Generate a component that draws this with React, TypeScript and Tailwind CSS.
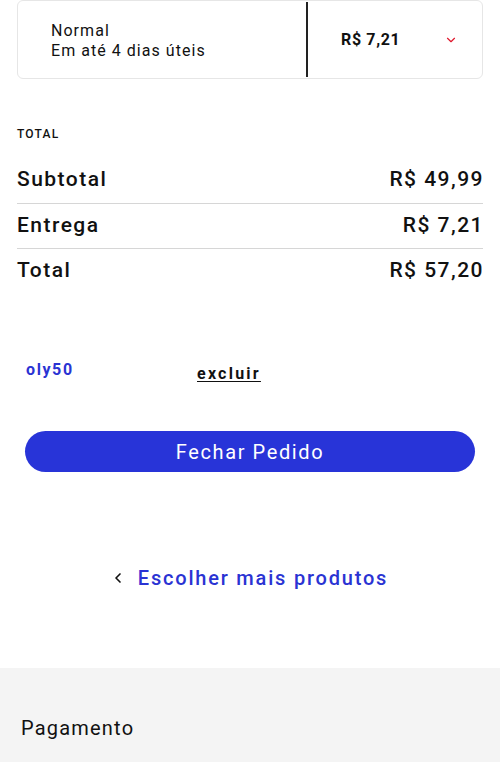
import { ChevronDown, ChevronLeft } from "lucide-react"

export default function App() {
  return (
    <main className="w-[500px] min-h-[762px] bg-white text-[#111] font-['Roboto',sans-serif] tracking-[0.08em] overflow-hidden">
      {/* Shipping option */}
      <div className="px-[17px]">
        <div className="flex h-[79px] border border-[#e6e6e6] rounded-md">
          <div className="flex-1 flex flex-col justify-center pl-[33px] pt-[2px] text-[16px] leading-[20px] tracking-[0.065em]">
            <span>Normal</span>
            <span>Em até 4 dias úteis</span>
          </div>
          <div className="w-[2px] bg-[#222] my-[1px]" />
          <div className="w-[174px] flex items-center pl-[33px] pr-[24px]">
            <span className="flex-1 text-[16px] font-bold tracking-[0.04em]">R$ 7,21</span>
            <ChevronDown className="w-[14px] h-[14px] text-[#e0182d]" strokeWidth={2} />
          </div>
        </div>
      </div>

      {/* Totals */}
      <section className="px-[17px] mt-[48px]">
        <h2 className="text-[12px] font-medium leading-[14px] tracking-[0.1em]">TOTAL</h2>
        <div className="mt-[18px] text-[21px] font-medium tracking-[0.07em]">
          <div className="flex justify-between h-[45px] items-center border-b border-[#d6d6d6] pb-[2px]">
            <span>Subtotal</span>
            <span className="-mr-[1px]">R$ 49,99</span>
          </div>
          <div className="flex justify-between h-[45px] items-center border-b border-[#d6d6d6]">
            <span>Entrega</span>
            <span className="-mr-[1px]">R$ 7,21</span>
          </div>
          <div className="flex justify-between h-[44px] items-center">
            <span>Total</span>
            <span className="-mr-[1px]">R$ 57,20</span>
          </div>
        </div>
      </section>

      {/* Coupon */}
      <div className="flex items-start px-[26px] mt-[67px]">
        <span className="w-[171px] text-[16px] font-bold text-[#2a33d3] leading-[20px] tracking-[0.1em]">oly50</span>
        <button className="mt-[4px] text-[16px] font-bold underline underline-offset-2 leading-[20px] tracking-[0.14em]">excluir</button>
      </div>

      <div className="px-[25px] mt-[47px]">
        <button className="w-full h-[41px] rounded-full bg-[#2834d8] text-white text-[20px] tracking-[0.08em]">
          Fechar Pedido
        </button>
      </div>

      <div className="flex items-center justify-center mt-[91px] gap-[12px] pr-[2px]">
        <ChevronLeft className="w-[16px] h-[16px] text-[#111]" strokeWidth={2.5} />
        <span className="text-[20px] font-medium text-[#2a33d3] tracking-[0.09em]">Escolher mais produtos</span>
      </div>

      <section className="mt-[75px] bg-[#f4f4f4] h-[100px] px-[21px] pt-[48px]">
        <h2 className="text-[20px] leading-[24px] tracking-[0.06em]">Pagamento</h2>
      </section>
    </main>
  )
}
